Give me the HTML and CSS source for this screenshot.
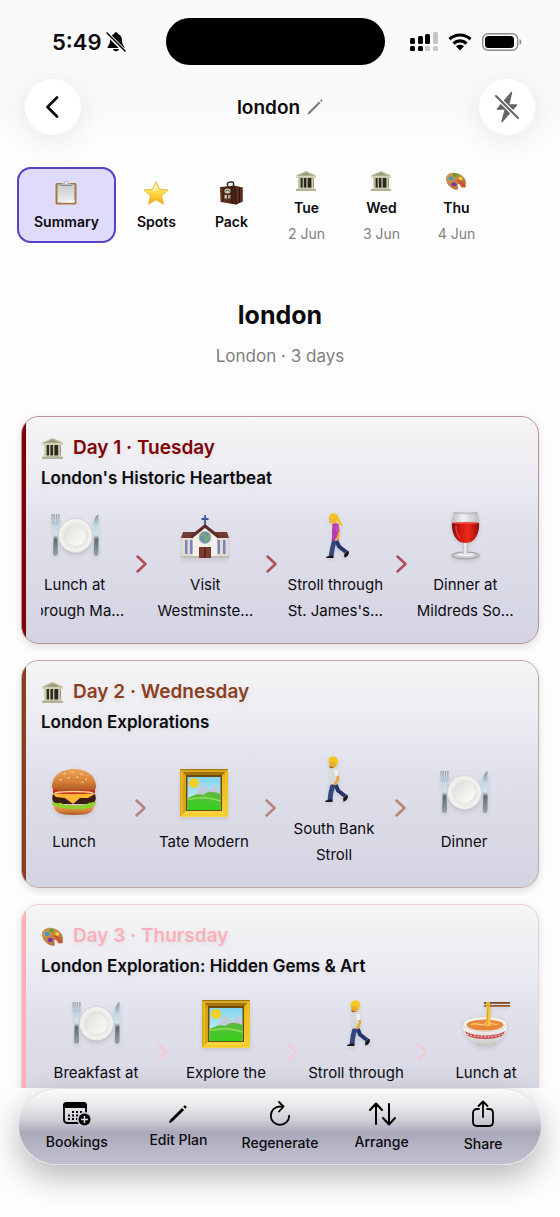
FILE: index.html
```html
<!DOCTYPE html>
<html lang="en">
<head>
  <meta charset="UTF-8" />
  <meta name="viewport" content="width=device-width, initial-scale=1.0" />
  <title>london</title>
  <link rel="stylesheet" href="styles.css">
</head>
<body>
  <!-- emoji set, all on a 48px grid -->
  <svg class="sprite" aria-hidden="true">
    <defs>
      <linearGradient id="g-star" x1="0" y1="0" x2="0" y2="1"><stop offset="0" stop-color="#fff3a8"/><stop offset=".5" stop-color="#fdda45"/><stop offset="1" stop-color="#f0a80c"/></linearGradient>
      <linearGradient id="g-paper" x1="0" y1="0" x2="0" y2="1"><stop offset="0" stop-color="#c9cacc"/><stop offset="1" stop-color="#eceded"/></linearGradient>
      <linearGradient id="g-bag" x1="0" y1="0" x2="1" y2="0"><stop offset="0" stop-color="#6b3a25"/><stop offset=".6" stop-color="#4d2415"/><stop offset="1" stop-color="#2e140b"/></linearGradient>
      <linearGradient id="g-steel" x1="0" y1="0" x2="0" y2="1"><stop offset="0" stop-color="#8b959d"/><stop offset=".3" stop-color="#c3d9e6"/><stop offset=".5" stop-color="#d3e3ec"/><stop offset=".6" stop-color="#5f6971"/><stop offset="1" stop-color="#98a5ae"/></linearGradient>
      <linearGradient id="g-plate" x1="0" y1="0" x2="1" y2="1"><stop offset="0" stop-color="#dcdddb"/><stop offset=".5" stop-color="#efefec"/><stop offset="1" stop-color="#fbfbf9"/></linearGradient>
      <linearGradient id="g-bun" x1="0" y1="0" x2="0" y2="1"><stop offset="0" stop-color="#eda55b"/><stop offset=".6" stop-color="#d67f38"/><stop offset="1" stop-color="#ad5822"/></linearGradient>
      <linearGradient id="g-frame" x1="0" y1="0" x2="1" y2="1"><stop offset="0" stop-color="#c98b09"/><stop offset=".5" stop-color="#e8b512"/><stop offset="1" stop-color="#f9d43b"/></linearGradient>
      <linearGradient id="g-sky" x1="0" y1="0" x2="0" y2="1"><stop offset="0" stop-color="#7fd6ef"/><stop offset="1" stop-color="#d9f3f6"/></linearGradient>
      <linearGradient id="g-grass" x1="0" y1="0" x2="0" y2="1"><stop offset="0" stop-color="#62b840"/><stop offset="1" stop-color="#35d11d"/></linearGradient>
      <linearGradient id="g-wine" x1="0" y1="0" x2="1" y2="0"><stop offset="0" stop-color="#8a0c08"/><stop offset=".3" stop-color="#cf1710"/><stop offset=".6" stop-color="#ee2a1c"/><stop offset="1" stop-color="#970b08"/></linearGradient>
      <linearGradient id="g-glass" x1="0" y1="0" x2="1" y2="0"><stop offset="0" stop-color="#b5b6b8"/><stop offset=".4" stop-color="#f6f6f6"/><stop offset="1" stop-color="#b9babd"/></linearGradient>
      <linearGradient id="g-bowl" x1="0" y1="0" x2="0" y2="1"><stop offset="0" stop-color="#ffffff"/><stop offset="1" stop-color="#cfcdc9"/></linearGradient>
      <linearGradient id="g-wood" x1="0" y1="0" x2="1" y2="1"><stop offset="0" stop-color="#d79a55"/><stop offset="1" stop-color="#b06d2c"/></linearGradient>
    </defs>

    <symbol id="e-clipboard" viewBox="0 0 48 48">
      <rect x="3" y="4" width="42" height="43" rx="3" fill="#a8783f"/>
      <rect x="7" y="7" width="34" height="36" fill="url(#g-paper)"/>
      <path d="M8 43l33-5v5z" fill="#fff"/>
      <path d="M13 9c0-4 3-4 6-5 1-5 9-5 10 0 3 1 6 1 6 5z" fill="#b7bcc2"/>
      <path d="M13 9h22" stroke="#858c93" stroke-width="2"/>
      <circle cx="24" cy="4" r="2" fill="#fff"/>
    </symbol>

    <symbol id="e-star" viewBox="0 0 48 48">
      <path d="M24 1l7 15.500 17 1.500-13 11.500 4 17L24 37.500 9 46.500l4-17L0 18l17-1.500z" fill="url(#g-star)" stroke="#e5a91b" stroke-width="1.500" stroke-linejoin="round"/>
      <path d="M24 6l4 13-12 2z" fill="#fff8cf" opacity=".7"/>
    </symbol>

    <symbol id="e-luggage" viewBox="0 0 48 48">
      <path d="M17 12V5c0-3 12-5 12-1v7" fill="none" stroke="#3a2a22" stroke-width="3"/>
      <path d="M2 13l30-3 15 3v28l-13 6-31-5z" fill="url(#g-bag)"/>
      <path d="M32 10l15 3v28l-13 6z" fill="#5a2d1c"/>
      <path d="M2 13l30-3 2 37" fill="none" stroke="#29120a" stroke-width="1.500"/>
      <path d="M8 13v29M26 11v34M41 13v30" stroke="#2c140b" stroke-width="2"/>
      <ellipse cx="17" cy="20" rx="6" ry="5" fill="#bccab8"/>
      <path d="M13 20l4-2 4 3" stroke="#445d6a" stroke-width="2" fill="none"/>
      <rect x="11" y="28" width="5" height="7" fill="#c5b8a4"/>
      <rect x="18" y="28" width="5" height="7" fill="#a9a192"/>
    </symbol>

    <symbol id="e-museum" viewBox="0 0 48 48">
      <rect x="7" y="15" width="34" height="28" fill="#2b2a22"/>
      <path d="M24 0L1 10v6h46v-6z" fill="#b9b798"/>
      <path d="M24 4L9 10h30z" fill="#9a987b"/>
      <path d="M1 12h46v4H1z" fill="#d6d4b5"/>
      <path d="M5 16h6v25H5zM16 16h3v25h-3zM25 16h3v25h-3zM37 16h6v25h-6z" fill="#cfcdb0"/>
      <path d="M9 16h2v25H9zM18 16h1v25h-1zM27 16h1v25h-1zM41 16h2v25h-2z" fill="#908e73"/>
      <path d="M3 40h42v3H3z" fill="#deddc4"/>
      <path d="M0 43h48v5H0z" fill="#b5b395"/>
    </symbol>

    <symbol id="e-palette" viewBox="0 0 48 48">
      <path d="M1 17C2 7 14 3 26 6c13 3 23 14 21 26-1 5-5 9-9 7-4-2-2-6-6-8-4-1-6 3-4 7 2 5-1 8-6 6C10 41 0 30 1 17z" fill="url(#g-wood)" stroke="#8d5a26" stroke-width="1"/>
      <path d="M30 23l15 14" stroke="#d8452f" stroke-width="5" stroke-linecap="round"/>
      <ellipse cx="12" cy="18" rx="5" ry="5" fill="#2f9fca"/>
      <ellipse cx="22" cy="10" rx="5" ry="4" fill="#43a82c"/>
      <ellipse cx="35" cy="18" rx="5" ry="4" fill="#f2cf3a"/>
      <ellipse cx="19" cy="32" rx="6" ry="5" fill="#8430a8"/>
    </symbol>

    <symbol id="e-plate" viewBox="0 0 48 48">
      <path d="M0.500 2v9c0 3 1.500 4.500 2.600 5L2 41c0 4 5 4 5 0L6 16c1.500-.5 2.500-2 2.500-5V2H7.200v8H6V2H4.900v8H3.700V2H2.500v8H1.600V2z" fill="url(#g-steel)"/>
      <circle cx="24.500" cy="25" r="17" fill="#bfc0c4" opacity=".6"/>
      <circle cx="24.500" cy="23.500" r="17" fill="#f0f0ed" stroke="#d0d0ce" stroke-width=".8"/>
      <circle cx="24.500" cy="23.500" r="12.500" fill="#fafaf7" stroke="#dadad6" stroke-width=".8"/>
      <circle cx="24.500" cy="23.500" r="11" fill="url(#g-plate)" stroke="#cfd0cd" stroke-width=".6"/>
      <path d="M47.500 2c-4 2-5.500 8-5.500 16v5h1.500L42.700 41c0 4 4.800 4 4.800 0z" fill="url(#g-steel)"/>
    </symbol>

    <symbol id="e-church" viewBox="0 0 48 48">
      <path d="M24 3v12M20.500 7h7" stroke="#3b5998" stroke-width="1.800"/>
      <path d="M1 25h46v20H1z" fill="#dfdcd2"/>
      <path d="M2 20h14l-3 6H0zM32 20h14l2 6H35z" fill="#713b34"/>
      <path d="M24 14L12 25v21h24V25z" fill="#f2f0e9"/>
      <path d="M24 12L9 24l2 2.500L24 16l13 10.500 2-2.500z" fill="#5b2c28"/>
      <circle cx="24" cy="25.500" r="6" fill="#6691a9" stroke="#b7b9b3" stroke-width="1"/>
      <path d="M20 25c2-5 5-3 4 1s4 1 4-3" stroke="#7dad70" stroke-width="2" fill="none"/>
      <path d="M4 28h2.500v14H4zM9 28h2.500v14H9zM36.500 28H39v14h-2.500zM42 28h2.500v14H42z" fill="#7f81bd"/>
      <path d="M18 35h12v11H18z" fill="#7c3a31"/>
      <path d="M24 35v11" stroke="#3d1815" stroke-width="1"/>
      <path d="M0 44h18v2H0zM30 44h18v2H30z" fill="#c1bdb0"/>
    </symbol>

    <symbol id="e-woman" viewBox="0 0 48 48">
      <path d="M25 28l3 6.500 7 5.500" fill="none" stroke="#26346c" stroke-width="4" stroke-linejoin="round"/>
      <path d="M33 42.500l3.500-4 1.500 1.200c0 3-1.500 5-4.500 6z" fill="#17171a"/>
      <path d="M23.500 28l-2 8-1.500 8" fill="none" stroke="#34457f" stroke-width="4.600" stroke-linejoin="round"/>
      <path d="M22.500 43.500V46H15c0-1.500 2-2 4-2.500z" fill="#17171a"/>
      <path d="M21.500 11.500c3-1 6-.5 6.500 2.500l-.5 14.500h-7c1-4 .5-5 .5-8z" fill="#b53cae"/>
      <path d="M27 16c1.500 5 1.500 8-2 12" stroke="#eeb035" stroke-width="2.200" stroke-linecap="round" fill="none"/>
      <path d="M24 14h4l.5 6H25z" fill="#c84bbd"/>
      <ellipse cx="22" cy="7.500" rx="4" ry="4.500" fill="#f0b43a"/>
      <path d="M18 5.500c0-5 8.500-6 9.500 0 1 3 3 5 4.500 8.500-3 0-4.500-1.500-5-4.500-2 .5-2.500-1-3.500-2.500-2 0-4 0-5.500-1.500z" fill="#f4c420"/>
    </symbol>

    <symbol id="e-man" viewBox="0 0 48 48">
      <path d="M25 27l3 7.500 7 5.500" fill="none" stroke="#26346c" stroke-width="4" stroke-linejoin="round"/>
      <path d="M33 42.500l3.500-4 1.500 1.200c0 3-1.500 5-4.500 6z" fill="#17171a"/>
      <path d="M23.500 27l-2.500 9-1 8" fill="none" stroke="#34457f" stroke-width="4.800" stroke-linejoin="round"/>
      <path d="M22.500 43.500V46H15c0-1.500 2-2 4-2.500z" fill="#17171a"/>
      <path d="M21.500 12.500c4-1 6 0 6.500 3l-.5 13h-8c1-4 .5-7 2-11z" fill="#d5dbd9"/>
      <path d="M27 18c2 5 .5 6-2 10" stroke="#e7a72e" stroke-width="2.400" stroke-linecap="round" fill="none"/>
      <path d="M24 14h4l.500 6h-3.500z" fill="#edf0ee"/>
      <ellipse cx="23" cy="7" rx="4" ry="5" fill="#eaac31"/>
      <path d="M18.500 5.500c-1-6 9.500-7 9.500-.5 0 3-1 4-2 5-.5-2-1-3-2-4.500-2 .5-3.500.5-5.500 0z" fill="#f5c91c"/>
      <path d="M19 9.500c1 1.600 3 1.800 5 1l-2 1.800c-2 0-3-1-3-2.800z" fill="#8c591b"/>
    </symbol>

    <symbol id="e-wine" viewBox="0 0 48 48">
      <ellipse cx="24.500" cy="43.500" rx="14" ry="3.500" fill="#c6c7ca" stroke="#8f9093" stroke-width=".8"/>
      <ellipse cx="24.500" cy="42.800" rx="9" ry="1.700" fill="#eeeeef"/>
      <path d="M22 28h5v14c0 1-5 1-5 0z" fill="url(#g-glass)"/>
      <path d="M12.500 1h24c2 7 3 13 1 18-2 6-7 10-13 10s-11-4-13-10c-2-5-1-11 1-18z" fill="url(#g-glass)" opacity=".9"/>
      <path d="M11 11h27c.5 9-3 20-13.500 20S10.500 20 11 11z" fill="url(#g-wine)"/>
      <ellipse cx="24.500" cy="11" rx="13.300" ry="1" fill="#e8493d"/>
      <ellipse cx="24.500" cy="1" rx="12" ry=".8" fill="#eee" stroke="#9d9ea1" stroke-width=".6"/>
      <path d="M15 14c0 5 1 9 4 12" stroke="#f0645a" stroke-width="1.500" fill="none" opacity=".6"/>
    </symbol>

    <symbol id="e-burger" viewBox="0 0 48 48">
      <path d="M4 36h40c0 7-5 10-20 10S4 43 4 36z" fill="url(#g-bun)"/>
      <path d="M3 25h42c2 6 0 10-6 10H9c-6 0-8-4-6-10z" fill="#3b1d12"/>
      <path d="M2 33c3 0 4 2 7 1s4 3 8 2 4 1 7 1 5-1 8-1 4-1 7-2 4-1 7-1c0 3-2 3-4 5s-5 0-7 2-5-1-8 0-4-1-7 0-5-2-8-1-3-2-6-2-4-1-4-4z" fill="#8ed12d"/>
      <path d="M3 25c2-2 40-2 42 0l-7 4-8 0-7 6-8-6-9-1z" fill="#ffb833"/>
      <path d="M3 20h42v4c-3 1.500-39 1.500-42 0z" fill="#c7321e"/>
      <path d="M5 24c8-2 30-2 38 0" stroke="#f2d79c" stroke-width="1.500" fill="none"/>
      <path d="M2 18C2 6 12 0 24 0s22 6 22 18c0 3-4 3.500-22 3.500S2 21 2 18z" fill="url(#g-bun)"/>
      <path d="M14 5l1-.5M22 3h1M31 5l1 .5M18 9l1-.5M27 8l1 .5M36 10l.5 1M10 11l1-.5M32 13l1 .5" stroke="#fbe0b0" stroke-width="1.100" stroke-linecap="round"/>
    </symbol>

    <symbol id="e-picture" viewBox="0 0 48 48">
      <rect width="48" height="48" rx="1" fill="url(#g-frame)"/>
      <path d="M0 0h48l-7 8H7z" fill="#a4730b"/>
      <path d="M0 0l7 8v33l-7 7z" fill="#d9a414"/>
      <path d="M0 48l7-7h34l7 7z" fill="#fbd63c"/>
      <rect x="2" y="2" width="44" height="44" fill="none" stroke="#f2c52c" stroke-width="1.300"/>
      <rect x="6" y="6" width="36" height="36" fill="#6c4a0b"/>
      <rect x="7.500" y="8" width="33" height="33" fill="url(#g-sky)"/>
      <path d="M19 19c2-3 3-1 4-4 3 2 4 4 5 5 4 1 5-1 6-5 2 0 3 4 6 6v5H15z" fill="#c2c9da"/>
      <circle cx="14" cy="14" r="5" fill="#f6cf24"/>
      <path d="M7.500 29c7-3 10-5 16-3 5-5 11-3 17-1v16h-33z" fill="url(#g-grass)"/>
      <path d="M7.500 30c8 0 15-4 33 2" stroke="#8fdc5e" stroke-width="1.500" fill="none"/>
    </symbol>

    <symbol id="e-ramen" viewBox="0 0 48 48">
      <path d="M14 41h20v4c-2 2-18 2-20 0z" fill="#c9c6c1"/>
      <path d="M1 24c0 12 8 20 22 20s22-8 22-20z" fill="url(#g-bowl)"/>
      <path d="M3 31c8 6 32 6 40 0-1 3-2 4-3 5-8 4-26 4-34 0-1-1-2-3-3-5z" fill="#cb4848"/>
      <path d="M5 34c9 4 27 4 36 0" stroke="#f3dfdc" stroke-width="1" stroke-dasharray="2 1.500" fill="none"/>
      <ellipse cx="23" cy="24" rx="22" ry="7.500" fill="#f4f2ed" stroke="#d2cec7" stroke-width=".8"/>
      <ellipse cx="23" cy="25" rx="18.500" ry="5.500" fill="#e8873c"/>
      <path d="M9 25c5-4 10 2 14-1s8 2 13 0" stroke="#f7c36a" stroke-width="1.500" fill="none"/>
      <path d="M25 5h4l-.5 21h-5z" fill="#f2c74a"/>
      <path d="M26 5l-1 20" stroke="#cf982b" stroke-width=".8"/>
      <path d="M22 2h26v1.800H22z" fill="#7d4424"/>
      <path d="M22 5h26v1.800H22z" fill="#98582f"/>
      <path d="M24 2h4v5h-4z" fill="#dfb03b"/>
    </symbol>

    <symbol id="i-chevron" viewBox="0 0 11 18">
      <path d="M1.500 1.500L9.500 9l-8 7.500" fill="none" stroke="currentColor" stroke-width="2.500" stroke-linecap="round" stroke-linejoin="round"/>
    </symbol>
  </svg>

  <div class="screen">
    <header class="header">
      <div class="status-bar">
        <div class="status-time">
          <span>5:49</span>
          <svg width="20" height="20" viewBox="0 0 20 20">
            <path d="M1.500 16c0-2 2.500-3 2.500-7.500C4 4.500 6.500 2.500 8 2c.5-2.300 3.500-2.300 4 0 2.500 1 4 3 4 6.500 0 4.500 2.500 5.500 2.500 7.500z"/>
            <path d="M7 17h6c-.5 3-5.500 3-6 0z"/>
            <path d="M0 .500L19 19.500" stroke="#fafafa" stroke-width="4"/>
            <path d="M1 1l18 18" stroke="#000" stroke-width="1.500" stroke-linecap="round"/>
          </svg>
        </div>
        <div class="island"></div>
        <div class="status-icons">
          <svg width="28" height="20" viewBox="0 0 28 20">
            <rect x="0" y="6" width="5" height="6" rx="1.500"/><rect x="8" y="4" width="5" height="8" rx="1.500"/><rect x="15" y="2" width="5" height="10" rx="1.500"/><rect x="23" y="0" width="5" height="12" rx="1.500" fill="#c6c6c6"/>
            <rect x="0" y="14" width="5" height="5" rx="1.500"/><rect x="8" y="14" width="5" height="5" rx="1.500"/><rect x="15" y="14" width="5" height="5" rx="1.500" fill="#c6c6c6"/><rect x="23" y="14" width="5" height="5" rx="1.500" fill="#c6c6c6"/>
          </svg>
          <svg width="24" height="18" viewBox="0 0 24 18">
            <path d="M1.500 6.200c6-5.600 15-5.600 21 0M5.500 10.500c3.700-3.500 9.300-3.500 13 0" fill="none" stroke="#000" stroke-width="3.200"/>
            <path d="M8 13.300c2.300-2 5.700-2 8 0L12 17.500z"/>
          </svg>
          <svg width="40" height="18" viewBox="0 0 40 18">
            <rect x=".7" y=".7" width="35" height="16.600" rx="5.500" fill="none" stroke="#8b8b8b" stroke-width="1.400"/>
            <rect x="3" y="3" width="29" height="12" rx="3.500"/>
            <path d="M37.500 6c2.500.8 2.500 5.200 0 6z" fill="#8b8b8b"/>
          </svg>
        </div>
      </div>
      <nav class="nav">
        <button class="round-button" type="button" aria-label="Back">
          <svg width="14" height="22" viewBox="0 0 14 22"><path d="M11 1.500L1.500 11l9.500 9.500" fill="none" stroke="#111" stroke-width="2.800" stroke-linecap="round" stroke-linejoin="round"/></svg>
        </button>
        <button class="name-button" type="button">
          london
          <svg width="16" height="16" viewBox="0 0 16 16"><path d="M0.500 15.500l.8-2.300L12 2.500l1.500 1.500L2.800 14.700zM13 1.600l.8-.8c.9-.7 2 .4 1.400 1.300l-.8.8z" fill="#7c7c7c"/></svg>
        </button>
        <button class="round-button" type="button" aria-label="Disable flash">
          <svg width="26" height="32" viewBox="0 0 26 32">
            <path d="M17.500 1.500L3.500 18h8L8 30.500 22.500 14h-8z" fill="#656565" stroke="#656565" stroke-width="1.500" stroke-linejoin="round"/>
            <path d="M2 5l22 22" stroke="#fff" stroke-width="4.500"/>
            <path d="M2 5l22 22" stroke="#656565" stroke-width="2" stroke-linecap="round"/>
          </svg>
        </button>
      </nav>
    </header>

    <main class="content">
      <div class="tabs">
        <button class="tab active" type="button"><svg class="tab-emoji"><use href="#e-clipboard"/></svg><span class="tab-label">Summary</span></button>
        <button class="tab" type="button"><svg class="tab-emoji"><use href="#e-star"/></svg><span class="tab-label">Spots</span></button>
        <button class="tab" type="button"><svg class="tab-emoji"><use href="#e-luggage"/></svg><span class="tab-label">Pack</span></button>
        <button class="tab" type="button"><svg class="tab-emoji"><use href="#e-museum"/></svg><span class="tab-label">Tue</span><span class="tab-date">2 Jun</span></button>
        <button class="tab" type="button"><svg class="tab-emoji"><use href="#e-museum"/></svg><span class="tab-label">Wed</span><span class="tab-date">3 Jun</span></button>
        <button class="tab" type="button"><svg class="tab-emoji"><use href="#e-palette"/></svg><span class="tab-label">Thu</span><span class="tab-date">4 Jun</span></button>
      </div>

      <div class="trip">
        <h1>london</h1>
        <p>London · 3 days</p>
      </div>

      <div class="days">
        <section class="day day-red">
          <h2><svg class="day-emoji"><use href="#e-museum"/></svg>Day 1 · Tuesday</h2>
          <h3>London's Historic Heartbeat</h3>
          <div class="flow">
            <div class="track scrolled">
              <div class="stop"><svg class="stop-emoji"><use href="#e-plate"/></svg><span>Lunch at<br>Borough Ma…</span></div>
              <svg class="arrow"><use href="#i-chevron"/></svg>
              <div class="stop"><svg class="stop-emoji"><use href="#e-church"/></svg><span>Visit<br>Westminste…</span></div>
              <svg class="arrow"><use href="#i-chevron"/></svg>
              <div class="stop"><svg class="stop-emoji"><use href="#e-woman"/></svg><span>Stroll through<br>St. James's…</span></div>
              <svg class="arrow"><use href="#i-chevron"/></svg>
              <div class="stop"><svg class="stop-emoji"><use href="#e-wine"/></svg><span>Dinner at<br>Mildreds So…</span></div>
            </div>
          </div>
        </section>

        <section class="day day-brown">
          <h2><svg class="day-emoji"><use href="#e-museum"/></svg>Day 2 · Wednesday</h2>
          <h3>London Explorations</h3>
          <div class="flow">
            <div class="track scrolled">
              <div class="stop"><svg class="stop-emoji"><use href="#e-burger"/></svg><span>Lunch</span></div>
              <svg class="arrow"><use href="#i-chevron"/></svg>
              <div class="stop"><svg class="stop-emoji"><use href="#e-picture"/></svg><span>Tate Modern</span></div>
              <svg class="arrow"><use href="#i-chevron"/></svg>
              <div class="stop"><svg class="stop-emoji"><use href="#e-man"/></svg><span>South Bank<br>Stroll</span></div>
              <svg class="arrow"><use href="#i-chevron"/></svg>
              <div class="stop"><svg class="stop-emoji"><use href="#e-plate"/></svg><span>Dinner</span></div>
            </div>
          </div>
        </section>

        <section class="day day-pink">
          <h2><svg class="day-emoji"><use href="#e-palette"/></svg>Day 3 · Thursday</h2>
          <h3>London Exploration: Hidden Gems &amp; Art</h3>
          <div class="flow">
            <div class="track track-top">
              <div class="stop"><svg class="stop-emoji"><use href="#e-plate"/></svg><span>Breakfast at</span></div>
              <svg class="arrow"><use href="#i-chevron"/></svg>
              <div class="stop"><svg class="stop-emoji"><use href="#e-picture"/></svg><span>Explore the</span></div>
              <svg class="arrow"><use href="#i-chevron"/></svg>
              <div class="stop"><svg class="stop-emoji"><use href="#e-man"/></svg><span>Stroll through</span></div>
              <svg class="arrow"><use href="#i-chevron"/></svg>
              <div class="stop"><svg class="stop-emoji"><use href="#e-ramen"/></svg><span>Lunch at</span></div>
            </div>
          </div>
        </section>
      </div>
    </main>

    <footer class="toolbar">
      <button type="button">
        <svg width="28" height="24" viewBox="0 0 28 24">
          <rect x="1" y="1" width="22" height="20" rx="3" fill="none" stroke="#000" stroke-width="1.800"/>
          <path d="M0 3.500C0 1 1.500 0 3.500 0h17C22.500 0 24 1 24 3.500V6H0z"/>
          <path d="M9 10h11M5 13.500h15M5 17h11" stroke="#000" stroke-width="1.800" stroke-dasharray="2 2"/>
          <circle cx="21.500" cy="17.500" r="7.500" fill="#c8c7d1"/>
          <circle cx="21.500" cy="17.500" r="6"/>
          <path d="M18 17.500h7M21.500 14v7" stroke="#dcdce2" stroke-width="1.500"/>
        </svg>
        Bookings
      </button>
      <button type="button">
        <svg width="20" height="20" viewBox="0 0 20 20"><path d="M1 19l.9-3L14 3.900l2.100 2.100L4 18.100zM15.200 2.700l1-1c1.300-1 3 .7 2.100 2.100l-1 1z"/></svg>
        Edit Plan
      </button>
      <button type="button">
        <svg width="22" height="26" viewBox="0 0 22 26">
          <path d="M11 5.500a9.200 9.200 0 1 0 9.200 9.200M11 5.500h3" fill="none" stroke="#000" stroke-width="1.800" stroke-linecap="round"/>
          <path d="M10 1l4.500 4.500L10 10.500" fill="none" stroke="#000" stroke-width="1.800" stroke-linecap="round" stroke-linejoin="round"/>
        </svg>
        Regenerate
      </button>
      <button type="button">
        <svg width="28" height="24" viewBox="0 0 28 24"><path d="M8 22V2M2 8l6-6.500L14 8M21 2v20M15 16l6 6.500 6-6.500" fill="none" stroke="#000" stroke-width="2" stroke-linecap="round" stroke-linejoin="round"/></svg>
        Arrange
      </button>
      <button type="button">
        <svg width="22" height="28" viewBox="0 0 22 28"><path d="M7 9H5c-2.500 0-4 1.500-4 4v9c0 2.500 1.500 4 4 4h12c2.500 0 4-1.500 4-4v-9c0-2.500-1.500-4-4-4h-2M11 17V2M6.500 6L11 1.500 15.500 6" fill="none" stroke="#000" stroke-width="1.800" stroke-linecap="round" stroke-linejoin="round"/></svg>
        Share
      </button>
    </footer>
  </div>
</body>
</html>
```
FILE: styles.css
```css
* {
  box-sizing: border-box;
}

body {
  margin: 0;
  font-family: Inter, "Liberation Sans", sans-serif;
  font-size: 15px;
  color: #0b0b0f;
  background: #fdfdfd;
}

button {
  border: 0;
  padding: 0;
  background: none;
  font: inherit;
  color: inherit;
}

h1, h2, h3, p {
  margin: 0;
}

.sprite {
  position: absolute;
  width: 0;
  height: 0;
}

.screen {
  height: 100vh;
  display: flex;
  flex-direction: column;
  overflow: hidden;
}

/* header */
.header {
  padding-top: 18px;
  background: linear-gradient(#fafafa 80%, #fdfdfd);
}

.status-bar {
  display: flex;
  align-items: center;
  padding: 0 38px 0 52px;
}

.status-time {
  flex: 1;
  display: flex;
  align-items: center;
  gap: 4px;
  font-size: 22px;
  font-weight: 600;
}

.island {
  width: 219px;
  height: 47px;
  border-radius: 24px;
  background: #000;
}

.status-icons {
  display: flex;
  align-items: center;
  gap: 10px;
  margin-left: 25px;
}

.nav {
  display: flex;
  justify-content: space-between;
  align-items: center;
  padding: 14px 25px 0;
}

.round-button {
  display: flex;
  align-items: center;
  justify-content: center;
  width: 56px;
  height: 56px;
  border-radius: 50%;
  background: #fff;
  box-shadow: 0 6px 32px rgba(0, 0, 0, 0.09);
}

.name-button {
  display: flex;
  align-items: center;
  gap: 7px;
  font-size: 19px;
  font-weight: 600;
}

/* tabs */
.content {
  flex: 1;
  min-height: 0;
  overflow: hidden;
}

.tabs {
  display: flex;
  gap: 6px;
  padding: 32px 17px 0;
}

.tab {
  display: flex;
  flex-direction: column;
  align-items: center;
  justify-content: center;
  min-width: 69px;
  height: 76px;
  padding: 4px 14px 0;
  border-radius: 14px;
}

.tab.active {
  padding: 4px 17px 0;
  background: #dfdbfb;
  box-shadow: inset 0 0 0 2px #5344c4;
}

.tab-emoji {
  width: 24px;
  height: 24px;
  margin-bottom: 6px;
}

.tab-label {
  font-size: 14px;
  font-weight: 600;
  line-height: 22px;
}

.tab-date {
  margin-top: 6px;
  font-size: 14px;
  line-height: 18px;
  color: #808080;
}

/* trip title */
.trip {
  padding: 54px 20px 47px;
  text-align: center;
}

.trip h1 {
  font-size: 25px;
  font-weight: 700;
  line-height: 36px;
}

.trip p {
  margin-top: 10px;
  font-size: 17px;
  line-height: 26px;
  color: #808080;
}

/* day cards */
.days {
  display: flex;
  flex-direction: column;
  gap: 16px;
  padding: 0 21px;
}

.day {
  padding: 18px 5px 19px 19px;
  border: 1px solid var(--line);
  border-radius: 18px;
  background:
    linear-gradient(var(--accent), var(--accent)) left / 4px 100% no-repeat,
    linear-gradient(#f5f5f6, #eaeaf1 30%, #e0e0eb 50%, #d4d3e2);
  box-shadow: 0 3px 8px rgba(0, 0, 0, 0.12);
}

.day-red {
  --accent: #800006;
  --line: #bd8f98;
  --arrow: #b04f5a;
}

.day-brown {
  --accent: #8c3f20;
  --line: #c3a9a3;
  --arrow: #b88478;
}

.day-pink {
  --accent: #fcb0b9;
  --line: #efcfd8;
  --arrow: #f3cbd6;
}

.day h2 {
  display: flex;
  align-items: center;
  gap: 9px;
  font-size: 19px;
  font-weight: 600;
  line-height: 26px;
  color: var(--accent);
  text-shadow: 0 2px 4px rgba(0, 0, 0, 0.08);
}

.day h3 {
  margin-top: 4px;
  font-size: 17px;
  font-weight: 600;
  line-height: 26px;
  text-shadow: 0 2px 4px rgba(0, 0, 0, 0.08);
}

.day-emoji {
  width: 21px;
  height: 21px;
  margin: 0 1px;
}

.flow {
  overflow: hidden;
  margin-top: 17px;
}

.track {
  display: flex;
  align-items: center;
  gap: 9px;
  height: 116px;
  margin-left: 6px;
}

.track.scrolled {
  margin-left: -16px;
}

.track-top .stop {
  align-self: flex-start;
}

.stop {
  flex: 0 0 98px;
  display: flex;
  flex-direction: column;
  align-items: center;
  line-height: 26px;
  text-align: center;
  white-space: nowrap;
}

.stop-emoji {
  width: 48px;
  height: 48px;
  margin: 4px 0 12px;
  filter: drop-shadow(0 2px 2px rgba(0, 0, 0, 0.1));
}

.arrow {
  flex: none;
  width: 11px;
  height: 18px;
  margin: 0 0 4px 3px;
  color: var(--arrow);
}

/* bottom toolbar */
.toolbar {
  z-index: 1;
  display: grid;
  grid-template-columns: repeat(5, 1fr);
  height: 77px;
  margin: 0 18px 52px;
  padding: 1px 7px 0;
  border: 1px solid #dddde6;
  border-radius: 39px;
  background: linear-gradient(#fbfbfb, #e9e9ec 22%, #cfced7 42%, #a9a8b8 58%, #b5b4c5 74%, #c0bfd0);
  box-shadow: 0 12px 32px rgba(0, 0, 0, 0.28);
}

.toolbar button {
  display: flex;
  flex-direction: column;
  align-items: center;
  justify-content: center;
  gap: 6px;
  font-size: 14px;
  font-weight: 500;
  line-height: 20px;
}
```
